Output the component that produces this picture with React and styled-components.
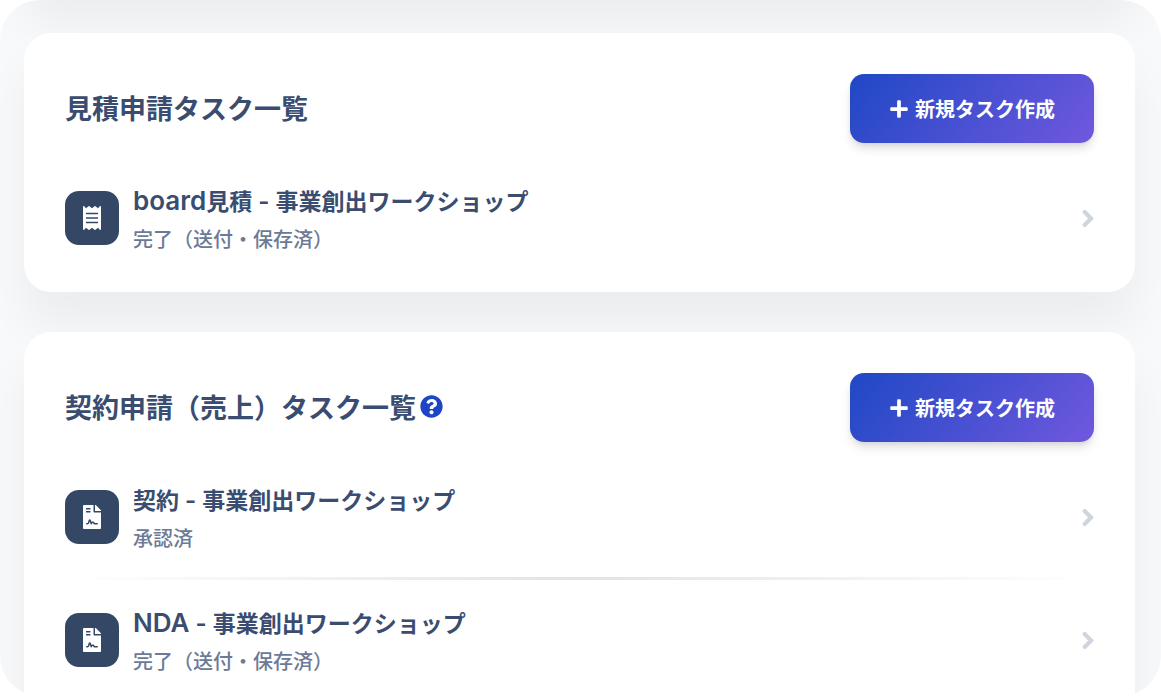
import React from 'react';
import styled, { createGlobalStyle } from 'styled-components';
import { FaPlus, FaReceipt, FaFileContract, FaQuestionCircle, FaChevronRight } from 'react-icons/fa';

const GlobalStyle = createGlobalStyle`
  *, *::before, *::after { box-sizing: border-box; }
  body {
    margin: 0;
    background: #fff;
    color: #3a4d70;
    font-family: "Noto Sans CJK JP", Inter, sans-serif;
  }
`;

const Page = styled.main`
  position: relative;
  display: flex;
  flex-direction: column;
  gap: 40px;
  height: 100vh;
  padding: 33px 26px 0 24px;
  overflow: hidden;
  border-radius: 40px;
  background: #f8f9fb;

  /* lower edge of the card scrolled out above */
  &::before {
    content: "";
    position: absolute;
    top: -108px;
    left: 24px;
    right: 26px;
    height: 100px;
    border-radius: 27px;
    box-shadow: 0 34px 46px rgba(0, 0, 0, 0.05);
  }
`;

const Card = styled.section`
  position: relative;
  flex: none;
  padding: 41px 41px 14px;
  border-radius: 27px;
  background: #fff;
  box-shadow: 0 34px 46px rgba(0, 0, 0, 0.05);

  &:last-child { padding-bottom: 54px; }
`;

const CardHeader = styled.header`
  display: flex;
  align-items: center;
  justify-content: space-between;
  margin-bottom: 15px;
`;

const Heading = styled.h2`
  display: flex;
  align-items: center;
  gap: 4px;
  margin: 0;
  padding-bottom: 2px;
  font-size: 27px;
  line-height: 40px;
  font-weight: 600;
`;

const HelpButton = styled.button`
  display: flex;
  padding: 0;
  border: 0;
  background: none;
  color: #1d45c4;
  font-size: 23px;
  cursor: pointer;
`;

const CreateButton = styled.button`
  display: flex;
  align-items: center;
  gap: 6px;
  height: 69px;
  padding: 0 39px;
  border: 0;
  border-radius: 14px;
  background: linear-gradient(310deg, #7058de, #1f48c5);
  box-shadow: 0 7px 12px -2px rgba(0, 0, 0, 0.12), 0 3px 6px -2px rgba(0, 0, 0, 0.1);
  color: #fff;
  font-family: inherit;
  font-size: 20px;
  line-height: 28px;
  font-weight: 600;
  cursor: pointer;
`;

const TaskList = styled.ul`
  margin: 0;
  padding: 0;
  list-style: none;
`;

const TaskItem = styled.li`
  & + &::before {
    content: "";
    display: block;
    height: 3px;
    background: linear-gradient(90deg, transparent, rgba(0, 0, 0, 0.11), transparent);
  }
`;

const TaskLink = styled.a`
  display: flex;
  align-items: center;
  gap: 14px;
  height: 120px;
  color: inherit;
  text-decoration: none;
`;

const TaskIcon = styled.span`
  display: flex;
  flex: none;
  align-items: center;
  justify-content: center;
  width: 54px;
  height: 54px;
  border-radius: 14px;
  background: #344866;
  color: #fff;
  font-size: 24px;
`;

const TaskText = styled.span`
  display: flex;
  flex: 1;
  flex-direction: column;
  padding-top: 2px;
`;

const TaskTitle = styled.span`
  font-size: 23px;
  line-height: 40px;
  font-weight: 600;
`;

const Latin = styled.span`
  font-family: Inter, sans-serif;
  font-size: ${({ $size }) => $size}px;
  line-height: 1;
  font-weight: 600;
`;

const TaskStatus = styled.span`
  color: #6c7a95;
  font-size: 20px;
  line-height: 38px;
  font-weight: 500;
`;

const Chevron = styled(FaChevronRight)`
  flex: none;
  width: 12px;
  height: 19px;
  color: #cfd5dd;
`;

const sections = [
  {
    title: '見積申請タスク一覧',
    tasks: [
      { Icon: FaReceipt, latin: 'board', name: '見積', status: '完了（送付・保存済）' },
    ],
  },
  {
    title: '契約申請（売上）タスク一覧',
    help: true,
    tasks: [
      { Icon: FaFileContract, name: '契約', status: '承認済' },
      { Icon: FaFileContract, latin: 'NDA', status: '完了（送付・保存済）' },
    ],
  },
];

export default function App() {
  return (
    <>
      <GlobalStyle />
      <Page>
        {sections.map(({ title, help, tasks }) => (
          <Card key={title}>
            <CardHeader>
              <Heading>
                {title}
                {help && (
                  <HelpButton type="button" aria-label="ヘルプ">
                    <FaQuestionCircle />
                  </HelpButton>
                )}
              </Heading>
              <CreateButton type="button">
                <FaPlus />
                新規タスク作成
              </CreateButton>
            </CardHeader>
            <TaskList>
              {tasks.map(({ Icon, latin, name, status }, index) => (
                <TaskItem key={index}>
                  <TaskLink href="#">
                    <TaskIcon>
                      <Icon />
                    </TaskIcon>
                    <TaskText>
                      <TaskTitle>
                        {latin && <Latin $size={26}>{latin}</Latin>}
                        {name}
                        <Latin $size={24}> - </Latin>
                        事業創出ワークショップ
                      </TaskTitle>
                      <TaskStatus>{status}</TaskStatus>
                    </TaskText>
                    <Chevron stroke="currentColor" strokeWidth={32} />
                  </TaskLink>
                </TaskItem>
              ))}
            </TaskList>
          </Card>
        ))}
      </Page>
    </>
  );
}
